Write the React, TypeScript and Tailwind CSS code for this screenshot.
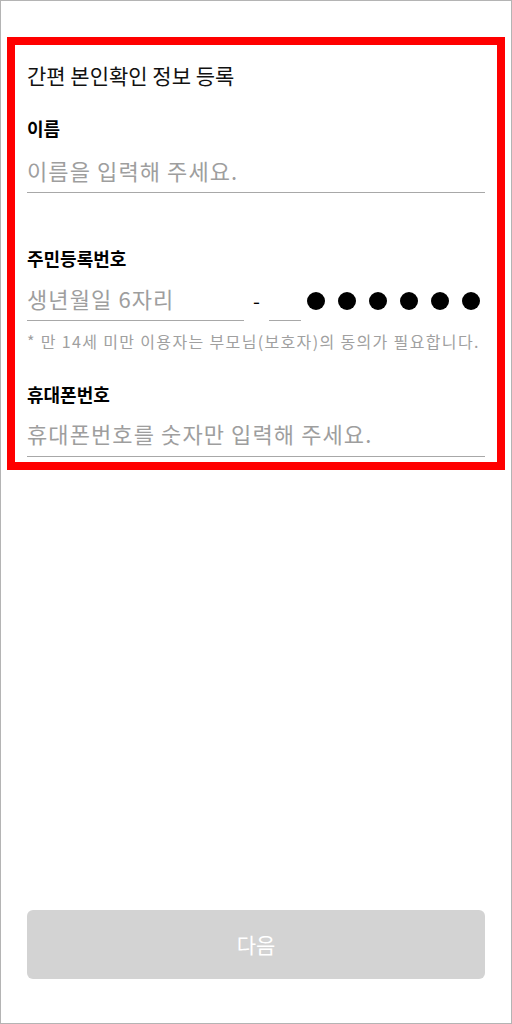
const FONT = { fontFamily: '"Noto Sans CJK KR", "Noto Sans", sans-serif' };

const Dot = () => <span className="block w-[18px] h-[18px] rounded-full bg-black" />;

export default function App() {
  return (
    <div
      style={FONT}
      className="w-[512px] h-[1024px] border border-[#b4b4b4] bg-white flex flex-col px-[6px] pt-[36px]"
    >
      <div className="border-8 border-[#ff0000] h-[433px] px-[12px] pt-[16px]">
        <h1 className="text-[21px] leading-[28px] text-[#111]">간편 본인확인 정보 등록</h1>

        <label className="block mt-[27px] text-[18px] leading-[24px] font-bold text-black">이름</label>
        <input
          placeholder="이름을 입력해 주세요."
          className="mt-[17px] w-full h-[36px] pb-[10px] border-b border-[#a8a8a8] text-[22px] tracking-[1.1px] outline-none placeholder:text-[#9e9e9e]"
        />

        <label className="block mt-[53px] text-[18px] leading-[24px] font-bold text-black">주민등록번호</label>
        <div className="mt-[14px] flex items-center h-[37px]">
          <input
            placeholder="생년월일 6자리"
            className="w-[217px] h-full pb-[8px] border-b border-[#a8a8a8] text-[22px] tracking-[1.1px] outline-none placeholder:text-[#9e9e9e]"
          />
          <span className="ml-[9px] pb-[4px] text-[20px] text-black">-</span>
          <div className="ml-[9px] w-[32px] h-full border-b border-[#a8a8a8]" />
          <div className="ml-[6px] flex gap-[13px] pb-[4px]">
            <Dot />
            <Dot />
            <Dot />
            <Dot />
            <Dot />
            <Dot />
          </div>
        </div>
        <p className="mt-[10px] text-[16px] leading-[20px] text-[#a0a0a0] tracking-[1.35px] whitespace-nowrap">
          * 만 14세 미만 이용자는 부모님(보호자)의 동의가 필요합니다.
        </p>

        <label className="block mt-[31px] text-[18px] leading-[24px] font-bold text-black">휴대폰번호</label>
        <input
          placeholder="휴대폰번호를 숫자만 입력해 주세요."
          className="mt-[14px] w-full h-[37px] pb-[10px] border-b border-[#a8a8a8] text-[22px] tracking-[1.1px] outline-none placeholder:text-[#9e9e9e]"
        />
      </div>

      <div className="mt-auto px-[20px] pb-[44px]">
        <button className="w-full h-[69px] rounded-[6px] bg-[#d3d3d3] text-white text-[21px]">다음</button>
      </div>
    </div>
  );
}
